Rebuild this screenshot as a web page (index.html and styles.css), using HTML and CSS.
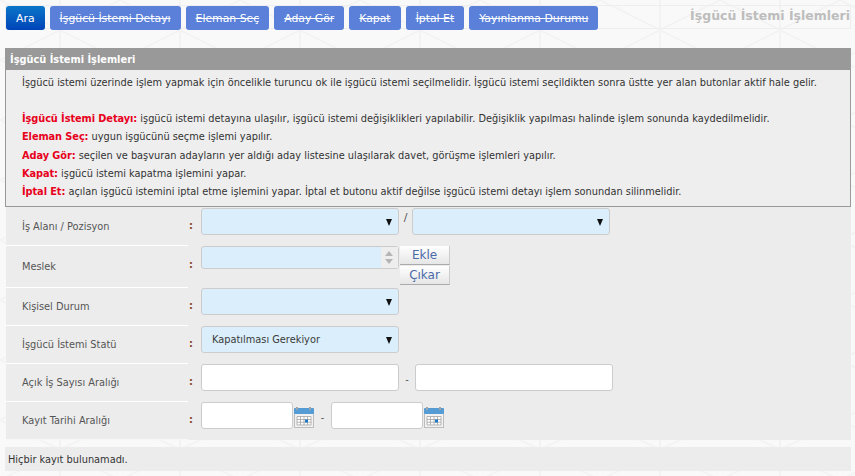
FILE: index.html
```html
<!DOCTYPE html>
<html lang="tr">
<head>
  <meta charset="UTF-8">
  <title>İşgücü İstemi İşlemleri</title>
  <link rel="stylesheet" href="styles.css">
</head>
<body>

<div class="toolbar">
  <a class="btn btn-active">Ara</a>
  <a class="btn">İşgücü İstemi Detayı</a>
  <a class="btn">Eleman Seç</a>
  <a class="btn">Aday Gör</a>
  <a class="btn">Kapat</a>
  <a class="btn">İptal Et</a>
  <a class="btn">Yayınlanma Durumu</a>
  <span class="page-title">İşgücü İstemi İşlemleri</span>
</div>

<section class="info">
  <h2>İşgücü İstemi İşlemleri</h2>
  <div class="info-body">
    <p class="intro">İşgücü istemi üzerinde işlem yapmak için öncelikle turuncu ok ile işgücü istemi seçilmelidir. İşgücü istemi seçildikten sonra üstte yer alan butonlar aktif hale gelir.</p>
    <p><b>İşgücü İstemi Detayı:</b> işgücü istemi detayına ulaşılır, işgücü istemi değişiklikleri yapılabilir. Değişiklik yapılması halinde işlem sonunda kaydedilmelidir.</p>
    <p><b>Eleman Seç:</b> uygun işgücünü seçme işlemi yapılır.</p>
    <p><b>Aday Gör:</b> seçilen ve başvuran adayların yer aldığı aday listesine ulaşılarak davet, görüşme işlemleri yapılır.</p>
    <p><b>Kapat:</b> işgücü istemi kapatma işlemini yapar.</p>
    <p><b>İptal Et:</b> açılan işgücü istemini iptal etme işlemini yapar. İptal et butonu aktif değilse işgücü istemi detayı işlem sonundan silinmelidir.</p>
  </div>
</section>

<form class="search">
  <div class="row">
    <label>İş Alanı / Pozisyon</label><span class="colon">:</span>
    <div class="fields">
      <div class="select"></div>
      <span class="sep sep-slash">/</span>
      <div class="select"></div>
    </div>
  </div>
  <div class="row row-tall">
    <label>Meslek</label><span class="colon">:</span>
    <div class="fields">
      <div class="listbox"><span class="spin"><i class="up"></i><i class="down"></i></span></div>
      <div class="mini-btns">
        <a class="mini-btn">Ekle</a>
        <a class="mini-btn">Çıkar</a>
      </div>
    </div>
  </div>
  <div class="row">
    <label>Kişisel Durum</label><span class="colon">:</span>
    <div class="fields"><div class="select"></div></div>
  </div>
  <div class="row">
    <label>İşgücü İstemi Statü</label><span class="colon">:</span>
    <div class="fields"><div class="select">Kapatılması Gerekiyor</div></div>
  </div>
  <div class="row">
    <label>Açık İş Sayısı Aralığı</label><span class="colon">:</span>
    <div class="fields">
      <input class="text" type="text">
      <span class="sep sep-dash">-</span>
      <input class="text" type="text">
    </div>
  </div>
  <div class="row row-last">
    <label>Kayıt Tarihi Aralığı</label><span class="colon">:</span>
    <div class="fields">
      <input class="text date" type="text">
      <svg class="cal" viewBox="0 0 20 21"><use href="#cal"/></svg>
      <span class="sep sep-date">-</span>
      <input class="text date" type="text">
      <svg class="cal" viewBox="0 0 20 21"><use href="#cal"/></svg>
    </div>
  </div>
</form>

<div class="result">Hiçbir kayıt bulunamadı.</div>

<svg class="defs" width="0" height="0">
  <symbol id="cal" viewBox="0 0 20 21">
    <rect x=".5" y="2.500" width="19" height="18" fill="#f2f2f2" stroke="#bdbdbd"/>
    <rect x="0" y="1" width="20" height="6" rx="1" fill="#559bd4"/>
    <rect x="2" y="0" width="2" height="3" fill="#9aa5ad"/>
    <rect x="15" y="0" width="2" height="3" fill="#9aa5ad"/>
    <path d="M3 9.500h14v8.500H3zM3 12.500h14M3 15.200h14M6.500 9.500v8.500M10 9.500v8.500M13.500 9.500v8.500" fill="#fff" stroke="#a3a3a3" stroke-width=".8"/>
    <rect x="11" y="12.500" width="3" height="3" fill="#1f78c8"/>
  </symbol>
</svg>

</body>
</html>
```

FILE: styles.css
```css
body {
  margin: 0;
  width: 855px;
  height: 476px;
  overflow: hidden;
  font-family: "DejaVu Sans", sans-serif;
  font-size: 9.800px;
  color: #333;
  background-color: #f9f9f9;
  background-image: url("data:image/svg+xml,%3Csvg xmlns='http://www.w3.org/2000/svg' width='120' height='120'%3E%3Cpath d='M0 60L60 30L120 60L60 90ZM60 0V120M0 0L60 30L120 0M0 120L60 90L120 120' fill='none' stroke='%23f3f3f3' stroke-width='2'/%3E%3C/svg%3E");
}

/* ust butonlar */
.toolbar {
  display: flex;
  align-items: flex-start;
  gap: 5px;
  height: 24px;
  margin: 5px 4px 0 5px;
  border: 1px solid #eee;
  box-sizing: border-box;
}

.btn {
  flex: none;
  height: 24px;
  box-sizing: border-box;
  padding: 0 10px;
  display: flex;
  align-items: center;
  border-radius: 3px;
  font-size: 10.850px;
  background: #5a80d9;
  color: #fff;
  text-decoration: line-through;
  white-space: nowrap;
}

.btn-active {
  background: linear-gradient(#0b76c9, #0044b8);
  text-decoration: none;
}

.page-title {
  margin-left: auto;
  font-weight: bold;
  font-size: 12.500px;
  line-height: 20px;
  color: #bdbdbd;
}

/* bilgi kutusu */
.info {
  margin: 19px 4px 0 5px;
  border: 1px solid #999;
  background: #eee;
}

.info h2 {
  margin: 0;
  height: 21px;
  line-height: 21px;
  padding-left: 4px;
  font-size: 9.800px;
  background: #999;
  color: #fff;
}

.info-body {
  box-sizing: border-box;
  height: 136px;
  padding: 4px 16px 0;
}

.info-body p {
  margin: 0;
  height: 18.200px;
  line-height: 18px;
  white-space: nowrap;
}

.info-body .intro {
  margin-bottom: 18px;
}

.info-body b {
  color: #e8001c;
  letter-spacing: -0.08px;
}

/* arama formu */
.search {
  margin: 0 4px 0 6px;
  height: 233px;
  padding-top: 1px;
  box-sizing: border-box;
  background: #ececec;
}

.row {
  display: flex;
  height: 38px;
}

.row label {
  width: 182px;
  box-sizing: border-box;
  padding: 13px 0 0 16px;
  border-bottom: 1px solid #fff;
  color: #555;
}

.colon {
  width: 13px;
  padding: 12px 0 0 1px;
  box-sizing: border-box;
  font-weight: bold;
  color: #8a4a2a;
}

.row-tall {
  height: 42px;
}

.row-tall label {
  padding-top: 15px;
}

.row-tall .colon {
  padding-top: 13px;
}

.row-last label {
  border-bottom-color: #f7f7f7;
}

.fields {
  display: flex;
  align-items: flex-start;
}

.select {
  width: 198px;
  height: 27px;
  line-height: 26px;
  box-sizing: border-box;
  padding-left: 10px;
  position: relative;
  border: 1px solid #ccc;
  border-radius: 3px;
  background: #dbeefb;
  color: #3a3a3a;
}

.select::after {
  content: "";
  position: absolute;
  right: 6px;
  top: 10px;
  border-top: 7px solid #111;
  border-left: 3px solid transparent;
  border-right: 3px solid transparent;
}

.sep {
  text-align: center;
  color: #555;
}

.sep-slash {
  width: 13px;
  font-size: 11px;
  line-height: 20px;
}

.sep-dash {
  width: 16px;
  line-height: 32px;
}

.sep-date {
  width: 17px;
  line-height: 32px;
}

.listbox {
  width: 198px;
  height: 23px;
  box-sizing: border-box;
  position: relative;
  border: 1px solid #ccc;
  border-radius: 3px;
  background: #dbeefb;
}

.spin {
  position: absolute;
  top: 0;
  right: 0;
  bottom: 0;
  width: 17px;
  background: #eee;
}

.spin i {
  position: absolute;
  left: 4px;
  border-left: 4px solid transparent;
  border-right: 4px solid transparent;
}

.spin .up {
  top: 4px;
  border-bottom: 5px solid #b5b5b5;
}

.spin .down {
  bottom: 4px;
  border-top: 5px solid #b5b5b5;
}

.mini-btns {
  display: flex;
  flex-direction: column;
  gap: 1px;
  margin-left: 1px;
}

.mini-btn {
  width: 50px;
  height: 19px;
  box-sizing: border-box;
  line-height: 18px;
  text-align: center;
  font-size: 12px;
  color: #4a6aa8;
  background: linear-gradient(#fff, #e6e6e6);
  border-bottom: 1px solid #aaa;
  border-right: 1px solid #ccc;
}

.text {
  width: 198px;
  height: 27px;
  box-sizing: border-box;
  margin: 0;
  padding: 0;
  border: 1px solid #ccc;
  border-radius: 3px;
  background: #fff;
}

.date {
  width: 92px;
}

.cal {
  width: 20px;
  height: 21px;
  margin: 5px 0 0 1px;
}

.defs {
  position: absolute;
}

.result {
  margin: 7px 4px 0 5px;
  height: 24px;
  line-height: 25px;
  padding-left: 3px;
  background: #ececec;
}
```
